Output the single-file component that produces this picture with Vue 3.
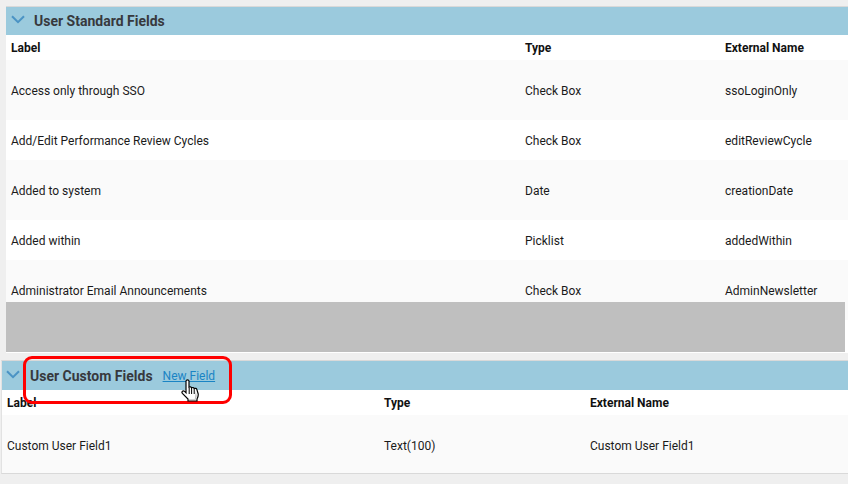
<template>
  <div class="page">
    <section v-for="panel in panels" :key="panel.title" class="panel" :class="panel.cls">
      <header class="panel-head">
        <svg class="chevron" width="14" height="9" viewBox="0 0 14 9">
          <path d="M1 1.2 L7 7.2 L13 1.2" fill="none" stroke="#4a93c4" stroke-width="2" />
        </svg>
        <h2>{{ panel.title }}</h2>
        <a v-if="panel.link" class="new-link" href="#">{{ panel.link }}</a>
      </header>
      <div class="row head-row">
        <span>Label</span>
        <span>Type</span>
        <span>External Name</span>
      </div>
      <div
        v-for="(row, i) in panel.rows"
        :key="row[0]"
        class="row"
        :class="i % 2 === 0 ? 'tall' : 'short'"
      >
        <span v-for="cell in row" :key="cell">{{ cell }}</span>
      </div>
    </section>

    <div class="gray-band"></div>
    <div class="callout"></div>
    <svg class="hand" width="19" height="23" viewBox="0 0 19 23">
      <path
        d="M5 2 C5.2 .6 7.8 .6 8 2 V8.2 C9 7.6 10.2 7.8 10.6 8.8 C11.6 8.2 12.8 8.5 13.2 9.5 C14.2 9 15.6 9.4 15.9 10.6 L17.2 15 C17.5 17 16.8 18.6 16 20 V22 H7 V20 L1.4 14.4 C.2 13 1.8 11 3.4 12.2 L5 13.8 Z"
        fill="#fff"
        stroke="#000"
        stroke-width="1.2"
      />
      <path d="M8.2 9 V15 M10.6 9 V15 M13.2 10 V15" stroke="#000" stroke-width="1" fill="none" />
      <path d="M14.8 12 L15.8 17 L14.8 20.8 H8 V20 H13.8 Z" fill="#c4c4c4" />
    </svg>
  </div>
</template>

<script setup>
const panels = [
  {
    title: 'User Standard Fields',
    cls: 'standard',
    rows: [
      ['Access only through SSO', 'Check Box', 'ssoLoginOnly'],
      ['Add/Edit Performance Review Cycles', 'Check Box', 'editReviewCycle'],
      ['Added to system', 'Date', 'creationDate'],
      ['Added within', 'Picklist', 'addedWithin'],
      ['Administrator Email Announcements', 'Check Box', 'AdminNewsletter'],
    ],
  },
  {
    title: 'User Custom Fields',
    cls: 'custom',
    link: 'New Field',
    rows: [['Custom User Field1', 'Text(100)', 'Custom User Field1']],
  },
]
</script>

<style scoped>
.page {
  position: relative;
  width: 848px;
  height: 484px;
  padding-top: 6px;
  box-sizing: border-box;
  background: #efefef;
  font-family: Roboto, "Liberation Sans", sans-serif;
  font-size: 12px;
  color: #1a1a1a;
  overflow: hidden;
}

.panel {
  background: #fff;
  border-top: 1px solid #d9d9d9;
}

.standard {
  height: 346px;
  margin-left: 6px;
  overflow: hidden;
}

.custom {
  height: 114px;
  margin-top: 7px;
  margin-left: 1px;
  border-left: 1px solid #e2e2e2;
  border-bottom: 1px solid #d9d9d9;
  box-sizing: border-box;
}

.panel-head {
  display: flex;
  align-items: center;
  height: 28px;
  background: #9bcadd;
}

.standard .panel-head {
  padding-left: 5px;
}

.custom .panel-head {
  height: 29px;
  padding-left: 4px;
}

.chevron {
  flex: none;
  margin-right: 9px;
  margin-top: -4px;
}

.custom .chevron {
  margin-right: 10px;
  margin-top: -3px;
}

h2 {
  margin: 0;
  font-size: 14px;
  font-weight: 700;
  color: #37393d;
}

.new-link {
  margin-left: 10px;
  font-size: 12px;
  color: #1a84c4;
}

.row {
  display: grid;
  align-items: center;
  box-sizing: border-box;
}

.standard .row {
  grid-template-columns: 514px 200px 1fr;
  padding-left: 5px;
}

.custom .row {
  grid-template-columns: 377px 206px 1fr;
  padding-left: 5px;
}

.head-row {
  height: 25px;
  background: #fff;
  font-weight: 700;
  color: #111;
}

.tall {
  height: 60px;
  padding-top: 2px;
  background: #fafafa;
}

.custom .tall {
  height: 58px;
  padding-top: 4px;
}

.short {
  height: 40px;
  padding-top: 2px;
  background: #fff;
}

.gray-band {
  position: absolute;
  left: 6px;
  top: 302px;
  width: 839px;
  height: 50px;
  background: #bfbfbf;
}

.callout {
  position: absolute;
  left: 23px;
  top: 356px;
  width: 209px;
  height: 48px;
  border: 3px solid #f00;
  border-radius: 9px;
  box-sizing: border-box;
}

.hand {
  position: absolute;
  left: 181px;
  top: 379px;
}
</style>

<style>
body {
  background: #fff;
}
</style>
